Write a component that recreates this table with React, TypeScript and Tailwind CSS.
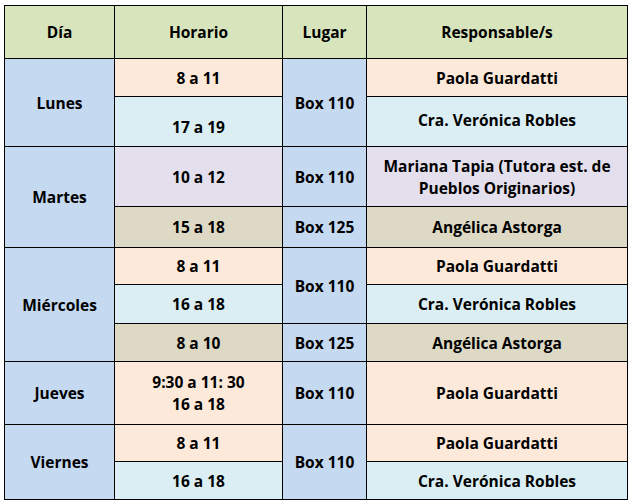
const peach = "bg-[#fde9d9]";
const sky = "bg-[#daeef3]";
const lilac = "bg-[#e4dfec]";
const tan = "bg-[#ddd9c4]";
const blue = "bg-[#c5d9f1]";

const cell = "border border-black text-center align-middle p-0";

export default function App() {
  return (
    <div className="pl-[4px] pt-[5px] bg-white w-[632px] h-[503px]">
      <table
        className="table-fixed border-collapse text-[15.5px] font-bold text-black leading-[22px]"
        style={{ fontFamily: '"Open Sans", "Noto Sans", Arial, sans-serif' }}
      >
        <colgroup>
          <col className="w-[110px]" />
          <col className="w-[168px]" />
          <col className="w-[84px]" />
          <col className="w-[261px]" />
        </colgroup>
        <thead>
          <tr className="h-[53px] bg-[#d8e4bc]">
            <th className={cell}>Día</th>
            <th className={cell}>Horario</th>
            <th className={cell}>Lugar</th>
            <th className={cell}>Responsable/s</th>
          </tr>
        </thead>
        <tbody>
          {/* Lunes */}
          <tr className="h-[38px]">
            <td rowSpan={2} className={`${cell} ${blue}`}>Lunes</td>
            <td className={`${cell} ${peach}`}>8 a 11</td>
            <td rowSpan={2} className={`${cell} ${blue}`}>Box 110</td>
            <td className={`${cell} ${peach}`}>Paola Guardatti</td>
          </tr>
          <tr className="h-[50px]">
            <td className={`${cell} ${sky} pt-[10px]`}>17 a 19</td>
            <td className={`${cell} ${sky} pb-[3px]`}>Cra. Verónica Robles</td>
          </tr>

          {/* Martes */}
          <tr className="h-[60px]">
            <td rowSpan={2} className={`${cell} ${blue}`}>Martes</td>
            <td className={`${cell} ${lilac}`}>10 a 12</td>
            <td className={`${cell} ${blue}`}>Box 110</td>
            <td className={`${cell} ${lilac}`}>
              Mariana Tapia (Tutora est. de
              <br />
              Pueblos Originarios)
            </td>
          </tr>
          <tr className="h-[41px]">
            <td className={`${cell} ${tan}`}>15 a 18</td>
            <td className={`${cell} ${blue}`}>Box 125</td>
            <td className={`${cell} ${tan}`}>Angélica Astorga</td>
          </tr>

          {/* Miércoles */}
          <tr className="h-[37px]">
            <td rowSpan={3} className={`${cell} ${blue}`}>Miércoles</td>
            <td className={`${cell} ${peach}`}>8 a 11</td>
            <td rowSpan={2} className={`${cell} ${blue}`}>Box 110</td>
            <td className={`${cell} ${peach}`}>Paola Guardatti</td>
          </tr>
          <tr className="h-[39px]">
            <td className={`${cell} ${sky}`}>16 a 18</td>
            <td className={`${cell} ${sky}`}>Cra. Verónica Robles</td>
          </tr>
          <tr className="h-[38px]">
            <td className={`${cell} ${tan}`}>8 a 10</td>
            <td className={`${cell} ${blue}`}>Box 125</td>
            <td className={`${cell} ${tan}`}>Angélica Astorga</td>
          </tr>

          {/* Jueves */}
          <tr className="h-[63px]">
            <td className={`${cell} ${blue}`}>Jueves</td>
            <td className={`${cell} ${peach}`}>
              9:30 a 11: 30
              <br />
              16 a 18
            </td>
            <td className={`${cell} ${blue}`}>Box 110</td>
            <td className={`${cell} ${peach}`}>Paola Guardatti</td>
          </tr>

          {/* Viernes */}
          <tr className="h-[37px]">
            <td rowSpan={2} className={`${cell} ${blue}`}>Viernes</td>
            <td className={`${cell} ${peach}`}>8 a 11</td>
            <td rowSpan={2} className={`${cell} ${blue}`}>Box 110</td>
            <td className={`${cell} ${peach}`}>Paola Guardatti</td>
          </tr>
          <tr className="h-[38px]">
            <td className={`${cell} ${sky}`}>16 a 18</td>
            <td className={`${cell} ${sky}`}>Cra. Verónica Robles</td>
          </tr>
        </tbody>
      </table>
    </div>
  );
}
